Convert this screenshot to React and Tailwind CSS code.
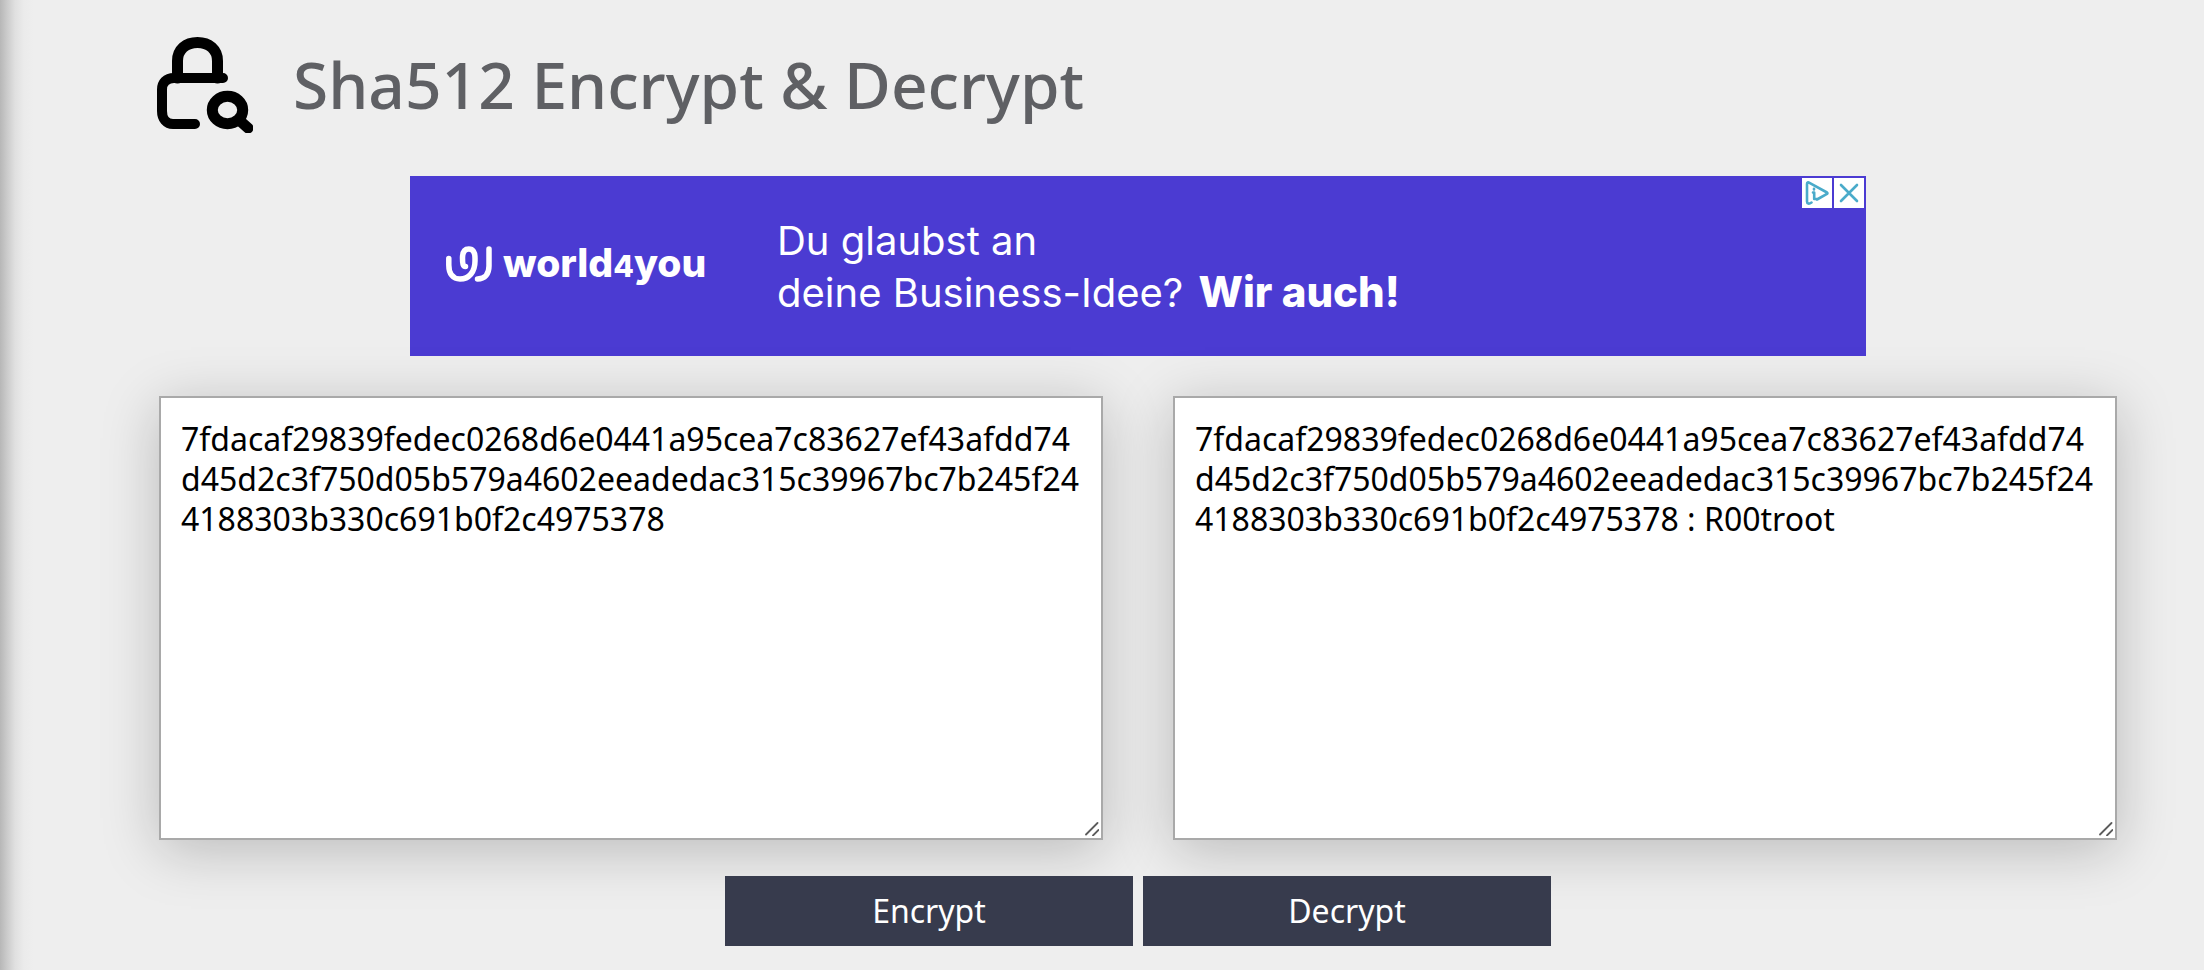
import React, { useState } from "react";

const HASH =
  "7fdacaf29839fedec0268d6e0441a95cea7c83627ef43afdd74d45d2c3f750d05b579a4602eeadedac315c39967bc7b245f244188303b330c691b0f2c4975378";

function LockSearchIcon() {
  return (
    <svg className="size-24 shrink-0" viewBox="0 0 96 96" fill="none" stroke="#000" strokeLinecap="round" strokeLinejoin="round" aria-hidden="true">
      <path strokeWidth="11" d="M20.500 41V24C20.500 12.500 29 5.500 40.500 5.500S60.500 12.500 60.500 24v17" />
      <path strokeWidth="10" d="M66 41H17C9 41 5 46 5 52.500V74c0 8 4.500 13 11 13h22" />
      <ellipse cx="70.500" cy="73" rx="15.200" ry="13.700" strokeWidth="11" />
      <path strokeWidth="11" d="M82 83l9 8" />
    </svg>
  );
}

function AdBanner() {
  return (
    <section aria-label="world4you" className="relative flex h-[180px] w-full max-w-[1456px] items-center self-center bg-[#4b3bd2] pl-9 font-['Inter',sans-serif] text-white">
      <div className="flex w-[331px] shrink-0 items-center gap-[11px] pb-1">
        <svg className="h-9 w-[46px] shrink-0" viewBox="0 0 46 36" fill="none" stroke="#fff" strokeWidth="5.500" strokeLinecap="round" strokeLinejoin="round" aria-hidden="true">
          <path d="M2.800 12.500V19C2.800 28 7 33 14 33c9 0 15-7 15-18V12C29 6 27 3 22.800 3S16.500 6 16.500 12c0 6 .5 8.500 3 8.500" />
          <path d="M43 3V20c0 8-4 13-11.500 13" />
        </svg>
        <span className="text-[39px] leading-9 font-extrabold">
          world<span className="text-[30px]">4</span>you
        </span>
      </div>
      <p className="text-[40px] leading-[51px] whitespace-nowrap">
        Du glaubst an
        <br />
        deine Business-Idee? <strong className="ml-1 text-[42px] font-extrabold">Wir auch!</strong>
      </p>
      <div className="absolute top-0.5 right-0.5 flex gap-0.5">
        <button type="button" aria-label="AdChoices" className="flex size-[30px] items-center justify-center bg-white">
          <svg className="size-6" viewBox="0 0 24 24" fill="none" stroke="#4aabca" strokeWidth="2.600" strokeLinejoin="round" strokeLinecap="round" aria-hidden="true">
            <path d="M6.500 21.500c-2.500 1.800-4.500 1.300-4.500-1V3c0-1.500 1-2 2.500-1.200L22 11.500c.6.400.6 1 0 1.400L12 18.500" />
            <path d="M8 11.500h1.200V18h2.500M9 7.800v.6" />
          </svg>
        </button>
        <button type="button" aria-label="Close ad" className="flex size-[30px] items-center justify-center bg-white">
          <svg className="size-5" viewBox="0 0 20 20" fill="none" stroke="#4aabca" strokeWidth="2.600" strokeLinecap="round" aria-hidden="true">
            <path d="M2 2l16 16M18 2L2 18" />
          </svg>
        </button>
      </div>
    </section>
  );
}

function HashBox({ label, value, onChange }) {
  return (
    <div className="relative flex flex-1">
      <textarea
        aria-label={label}
        value={value}
        onChange={(e) => onChange(e.target.value)}
        spellCheck={false}
        className="h-[444px] w-full resize-none border-2 border-[#a9a9a9] bg-white py-[21px] pr-4 pl-5 text-[32px] leading-10 break-all text-black shadow-[0_10px_54px_rgba(0,0,0,0.22)] outline-none"
      />
      <svg className="pointer-events-none absolute right-1 bottom-1 size-3.5" viewBox="0 0 14 14" stroke="#5c5c5c" strokeWidth="1.800" strokeLinecap="round" aria-hidden="true">
        <path d="M1 12.500L12.500 1M8 13.500L13.500 8" />
      </svg>
    </div>
  );
}

export default function App() {
  const [input, setInput] = useState(HASH);
  const [output, setOutput] = useState(HASH + " : R00troot");
  const button = "h-[70px] w-[408px] bg-[#373b4d] text-[32px] text-white";

  return (
    <main className="flex min-h-screen flex-col bg-[#eeeeee] bg-[linear-gradient(to_right,#b7b7b7_0px,#cbcbcb_7px,#e0e0e0_15px,#ebebeb_24px,#eeeeee_34px)] pt-[37px] pr-[87px] pb-6 pl-[159px] font-['Noto_Sans',sans-serif]">
      <header className="-ml-0.5 flex h-24 items-center gap-10">
        <LockSearchIcon />
        <h1 className="text-[64px] leading-none font-medium text-[#5f6064]">Sha512 Encrypt &amp; Decrypt</h1>
      </header>
      <div className="mt-[43px] flex flex-col">
        <AdBanner />
      </div>
      <div className="mt-10 flex gap-[70px]">
        <HashBox label="Input" value={input} onChange={setInput} />
        <HashBox label="Result" value={output} onChange={setOutput} />
      </div>
      <div className="relative mt-9 flex justify-center gap-2.5">
        <button type="button" className={button}>Encrypt</button>
        <button type="button" className={button}>Decrypt</button>
      </div>
    </main>
  );
}
